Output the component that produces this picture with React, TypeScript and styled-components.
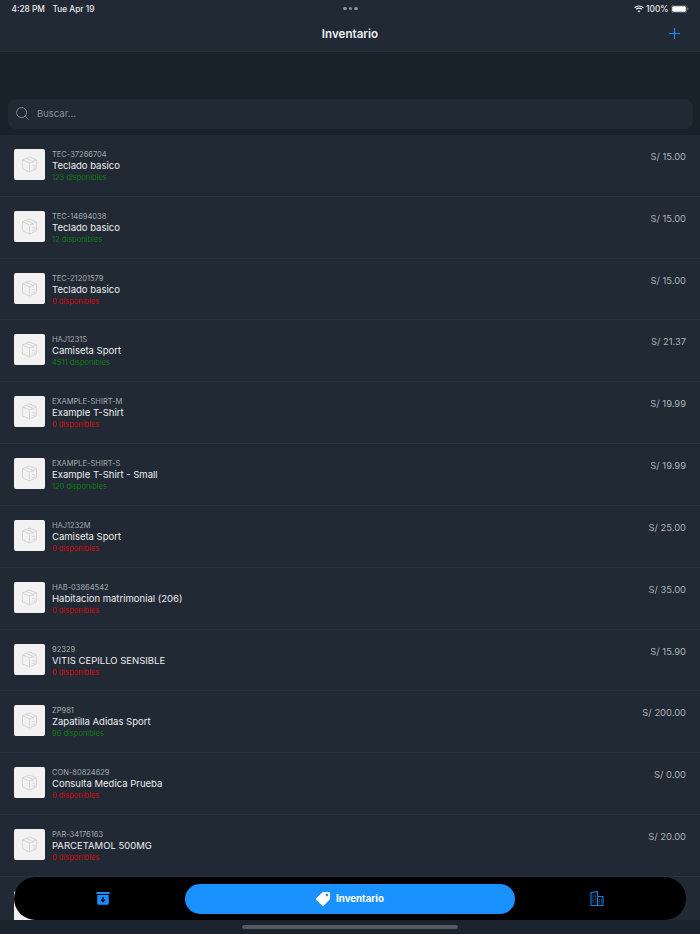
import styled, { createGlobalStyle } from "styled-components";
import { FaTag } from "react-icons/fa";

interface IProduct {
  sku: string;
  name: string;
  price: string;
  stock: number;
}

const products: IProduct[] = [
  { sku: "TEC-37266704", name: "Teclado basico", price: "S/ 15.00", stock: 123 },
  { sku: "TEC-14694038", name: "Teclado basico", price: "S/ 15.00", stock: 12 },
  { sku: "TEC-21201579", name: "Teclado basico", price: "S/ 15.00", stock: 0 },
  { sku: "HAJ1231S", name: "Camiseta Sport", price: "S/ 21.37", stock: 4511 },
  { sku: "EXAMPLE-SHIRT-M", name: "Example T-Shirt", price: "S/ 19.99", stock: 0 },
  { sku: "EXAMPLE-SHIRT-S", name: "Example T-Shirt - Small", price: "S/ 19.99", stock: 120 },
  { sku: "HAJ1232M", name: "Camiseta Sport", price: "S/ 25.00", stock: 0 },
  { sku: "HAB-03864542", name: "Habitacion matrimonial (206)", price: "S/ 35.00", stock: 0 },
  { sku: "92329", name: "VITIS CEPILLO SENSIBLE", price: "S/ 15.90", stock: 0 },
  { sku: "ZP981", name: "Zapatilla Adidas Sport", price: "S/ 200.00", stock: 96 },
  { sku: "CON-80824629", name: "Consulta Medica Prueba", price: "S/ 0.00", stock: 0 },
  { sku: "PAR-34176163", name: "PARCETAMOL 500MG", price: "S/ 20.00", stock: 0 },
  { sku: "", name: "", price: "", stock: 0 },
];

const GlobalStyle = createGlobalStyle`
  html, body {
    margin: 0;
    padding: 0;
    background: #18222b;
  }
`;

const Screen = styled.div`
  position: relative;
  width: 700px;
  height: 934px;
  overflow: hidden;
  background: #18222b;
  font-family: Inter, "Liberation Sans", sans-serif;
  color: #fff;
`;

const StatusBar = styled.div`
  height: 17px;
  padding: 0 11px 0 11.5px;
  display: flex;
  align-items: center;
  justify-content: space-between;
  background: #212934;
  font-size: 8.3px;
  font-weight: 500;
  color: #e8eaec;
`;

const StatusLeft = styled.div`
  display: flex;
  gap: 7.5px;
  width: 130px;
`;

const StatusRight = styled.div`
  display: flex;
  align-items: center;
  justify-content: flex-end;
  gap: 2.5px;
  width: 130px;
`;

const Dots = styled.div`
  display: flex;
  gap: 2px;
`;

const Dot = styled.span`
  width: 3.5px;
  height: 3.5px;
  border-radius: 50%;
  background: #8c929a;
`;

const NavBar = styled.div`
  height: 35px;
  padding: 0 20px 1px 0;
  box-sizing: border-box;
  position: relative;
  display: flex;
  align-items: center;
  justify-content: flex-end;
  background: #212934;
  border-bottom: 1px solid #263039;
`;

const Title = styled.div`
  position: absolute;
  left: 0;
  right: 0;
  text-align: center;
  font-size: 11.6px;
  font-weight: 600;
  color: #f0f1f3;
`;

const SearchArea = styled.div`
  height: 83px;
  padding: 47px 7px 0 8px;
  box-sizing: border-box;
`;

const SearchBox = styled.div`
  height: 30px;
  padding: 0 8px 1px;
  box-sizing: border-box;
  display: flex;
  align-items: center;
  gap: 8px;
  border-radius: 8px;
  background: #212934;
  font-size: 9.5px;
  color: #8a9098;
`;

const List = styled.div`
  background: #212934;
`;

const Row = styled.div`
  height: 61.82px;
  box-sizing: border-box;
  padding: 14px 14px 0 14px;
  display: flex;
  gap: 7px;
  border-bottom: 1px solid #2a333d;
`;

const Thumb = styled.div`
  width: 31px;
  height: 31px;
  flex-shrink: 0;
  display: flex;
  align-items: center;
  justify-content: center;
  border-radius: 2px;
  background: #f2f2f2;
`;

const Info = styled.div`
  flex: 1;
  display: flex;
  flex-direction: column;
`;

const Sku = styled.div`
  height: 11px;
  line-height: 11px;
  font-size: 7.5px;
  color: #a4a9af;
`;

const Name = styled.div`
  height: 13px;
  margin-top: -1px;
  line-height: 13px;
  font-size: 9.5px;
  font-weight: 400;
  color: #eceef0;
`;

const Stock = styled.div<{ $available: boolean }>`
  height: 10px;
  margin-top: 1px;
  line-height: 10px;
  font-size: 7.5px;
  color: ${(props) => (props.$available ? "#0f7a15" : "#d00a12")};
`;

const Price = styled.div`
  margin-top: 1px;
  font-size: 9.4px;
  line-height: 13px;
  color: #aeb2b7;
`;

const BottomArea = styled.div`
  position: absolute;
  left: 0;
  right: 0;
  bottom: 0;
  height: 14px;
  display: flex;
  justify-content: center;
  padding-top: 5px;
  box-sizing: border-box;
  background: #1a232d;
`;

const HomeBar = styled.div`
  width: 216px;
  height: 4px;
  border-radius: 2px;
  background: #55595e;
`;

const TabBar = styled.div`
  position: absolute;
  left: 14px;
  top: 877px;
  width: 672px;
  height: 43px;
  box-sizing: border-box;
  padding: 0 7px 0 7px;
  display: grid;
  grid-template-columns: 164px 330px 164px;
  align-items: center;
  border-radius: 22px;
  background: #000;
`;

const Tab = styled.div`
  display: flex;
  align-items: center;
  justify-content: center;
`;

const ActiveTab = styled.div`
  height: 30px;
  display: flex;
  align-items: center;
  justify-content: center;
  gap: 6px;
  border-radius: 15px;
  background: #1991ff;
  font-size: 9.7px;
  font-weight: 700;
  color: #fff;
`;

const BoxIcon = () => (
  <svg width="17" height="17" viewBox="0 0 17 17" fill="none" stroke="#d6d6d6" strokeWidth="1" strokeLinejoin="round">
    <path d="M8.5 1 L15.5 3.8 V12.8 L8.5 16 L1.5 12.8 V3.8 Z" />
    <path d="M1.5 3.8 L8.5 7 L15.5 3.8 M8.5 7 V16 M5 2.4 L12 5.4 V7.4" />
    <path d="M11 9.6 H14 V12.2 H11" strokeWidth="0.8" />
  </svg>
);

const SearchIcon = () => (
  <svg width="13" height="13" viewBox="0 0 13 13" fill="none" stroke="#858b93" strokeWidth="1">
    <circle cx="5.6" cy="5.6" r="5" />
    <path d="M9.2 9.2 L12.6 12.6" />
  </svg>
);

const PlusIcon = () => (
  <svg width="11" height="11" viewBox="0 0 11 11" stroke="#1a8cff" strokeWidth="1.2">
    <path d="M5.5 0 V11 M0 5.5 H11" />
  </svg>
);

const WifiIcon = () => (
  <svg width="10" height="8" viewBox="0 0 10 8" fill="none" stroke="#f2f2f2" strokeWidth="1.2">
    <path d="M0.6 2.7 C3 0.4 7 0.4 9.4 2.7" />
    <path d="M2.2 4.3 C3.8 2.9 6.2 2.9 7.8 4.3" />
    <path d="M5 7.4 L3.6 5.9 C4.4 5.2 5.6 5.2 6.4 5.9 Z" fill="#f2f2f2" stroke="none" />
  </svg>
);

const BatteryIcon = () => (
  <svg width="18" height="8" viewBox="0 0 18 8">
    <rect x="0.3" y="0.3" width="15.4" height="7.4" rx="2" fill="none" stroke="#7e8287" strokeWidth="0.6" />
    <rect x="1.2" y="1.2" width="13.6" height="5.6" rx="1.2" fill="#fff" />
    <path d="M16.4 2.8 C17.2 3 17.4 3.5 17.4 4 C17.4 4.5 17.2 5 16.4 5.2 Z" fill="#7e8287" />
  </svg>
);

const ArchiveIcon = () => (
  <svg width="14" height="13" viewBox="0 0 14 13">
    <rect x="0.4" y="0" width="13.2" height="2" fill="#1a8cff" />
    <path d="M1.2 3 H12.8 V11.6 C12.8 12.4 12.3 12.8 11.6 12.8 H2.4 C1.7 12.8 1.2 12.4 1.2 11.6 Z" fill="#1a8cff" />
    <path d="M7 5 V9 M5 7.6 L7 9.6 L9 7.6" stroke="#000" strokeWidth="1.2" fill="none" />
  </svg>
);

const BuildingIcon = () => (
  <svg width="14" height="15" viewBox="0 0 14 15" fill="none" stroke="#1a80e6" strokeWidth="1.1">
    <path d="M1 14.5 V1.5 L7.5 0.7 V14.5 Z" />
    <path d="M7.5 5.5 H13 V14.5 H1" />
    <path d="M3 3.5 V12.5 M5.3 3 V12.5 M9.3 8 V12.5 M11.3 8 V12.5" strokeWidth="0.8" strokeDasharray="1.2 0.6" />
  </svg>
);

const App = () => {
  return (
    <Screen>
      <GlobalStyle />
      <StatusBar>
        <StatusLeft>
          <span>4:28 PM</span>
          <span>Tue Apr 19</span>
        </StatusLeft>
        <Dots>
          <Dot />
          <Dot />
          <Dot />
        </Dots>
        <StatusRight>
          <WifiIcon />
          <span>100%</span>
          <BatteryIcon />
        </StatusRight>
      </StatusBar>
      <NavBar>
        <Title>Inventario</Title>
        <PlusIcon />
      </NavBar>
      <SearchArea>
        <SearchBox>
          <SearchIcon />
          <span>Buscar...</span>
        </SearchBox>
      </SearchArea>
      <List>
        {products.map((product, index) => (
          <Row key={index}>
            <Thumb>
              <BoxIcon />
            </Thumb>
            <Info>
              <Sku>{product.sku}</Sku>
              <Name>{product.name}</Name>
              {product.sku && (
                <Stock $available={product.stock > 0}>
                  {product.stock} disponibles
                </Stock>
              )}
            </Info>
            <Price>{product.price}</Price>
          </Row>
        ))}
      </List>
      <BottomArea>
        <HomeBar />
      </BottomArea>
      <TabBar>
        <Tab>
          <ArchiveIcon />
        </Tab>
        <ActiveTab>
          <FaTag size={14} style={{ transform: "scaleX(-1)" }} />
          Inventario
        </ActiveTab>
        <Tab>
          <BuildingIcon />
        </Tab>
      </TabBar>
    </Screen>
  );
};

export default App;
